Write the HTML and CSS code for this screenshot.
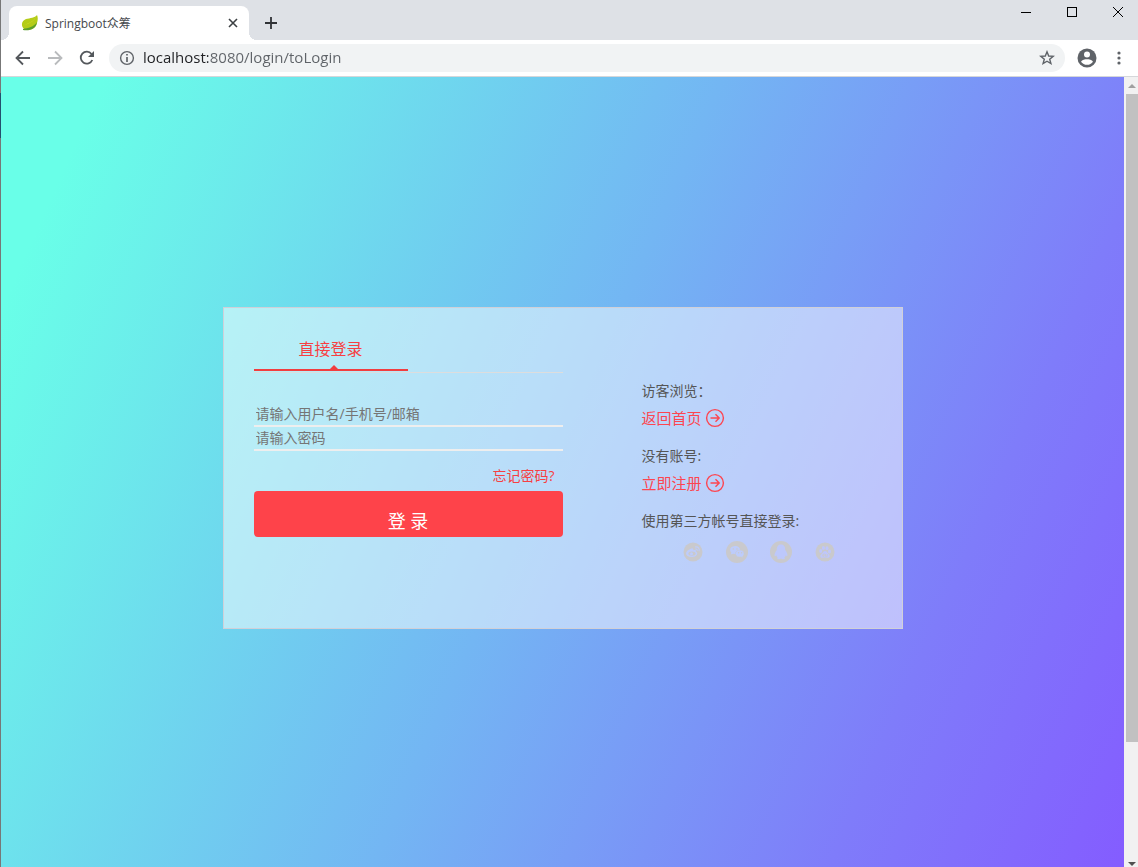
FILE: index.html
```html
<!DOCTYPE html>
<html lang="zh-CN">
<head>
  <meta charset="UTF-8">
  <title>Springboot众筹</title>
  <link rel="stylesheet" href="styles.css">
</head>
<body>
  <header class="tab-strip">
    <div class="tab">
      <svg class="favicon" viewBox="0 0 18 18">
        <path d="M16 1C14 4 9 4 5 5C0 7 0 12 3 15C9 17 15 15 16 9C17 6 17 3 16 1Z" fill="#b4cc18"/>
        <path d="M15 2C14 7 9 9 4 11C7 9 13 8 15 2Z" fill="#d5df2b"/>
        <path d="M2 15C7 14 13 13 16 8C15 15 9 17 2 16Z" fill="#5b9f2c"/>
      </svg>
      <span class="tab-title">Springboot众筹</span>
      <button class="icon-btn" aria-label="关闭标签页">
        <svg width="16" height="16" viewBox="0 0 16 16"><path d="M4 4L12 12M12 4L4 12" stroke="#3c4043" stroke-width="1.6"/></svg>
      </button>
    </div>
    <button class="icon-btn new-tab" aria-label="新标签页">
      <svg width="16" height="16" viewBox="0 0 16 16"><path d="M8 2V14M2 8H14" stroke="#303236" stroke-width="1.8"/></svg>
    </button>
    <div class="window-controls">
      <button class="icon-btn" aria-label="最小化">
        <svg width="12" height="12" viewBox="0 0 12 12"><path d="M1 6.5H11" stroke="#000"/></svg>
      </button>
      <button class="icon-btn" aria-label="最大化">
        <svg width="12" height="12" viewBox="0 0 12 12"><rect x="1.5" y="1.5" width="9" height="9" fill="none" stroke="#000"/></svg>
      </button>
      <button class="icon-btn" aria-label="关闭">
        <svg width="12" height="12" viewBox="0 0 12 12"><path d="M1 1L11 11M11 1L1 11" stroke="#000"/></svg>
      </button>
    </div>
  </header>

  <nav class="toolbar">
    <button class="icon-btn" aria-label="后退">
      <svg width="16" height="16" viewBox="0 0 16 16" fill="none" stroke="#54585c" stroke-width="1.8"><path d="M15 8H2M8 1.5L1.5 8L8 14.5"/></svg>
    </button>
    <button class="icon-btn" aria-label="前进">
      <svg width="16" height="16" viewBox="0 0 16 16" fill="none" stroke="#b9bbbd" stroke-width="1.8"><path d="M1 8H14M8 1.5L14.5 8L8 14.5"/></svg>
    </button>
    <button class="icon-btn" aria-label="重新加载">
      <svg width="16" height="16" viewBox="0 0 16 16"><path d="M13.3 10A6 6 0 1 1 12.5 4" fill="none" stroke="#54585c" stroke-width="1.8"/><path d="M15 1V7H9Z" fill="#54585c"/></svg>
    </button>
    <div class="omnibox">
      <svg width="16" height="16" viewBox="0 0 16 16"><circle cx="8" cy="8" r="6.4" fill="none" stroke="#5f6368" stroke-width="1.4"/><path d="M8 7V12M8 4V5.6" stroke="#5f6368" stroke-width="1.7"/></svg>
      <input class="url" type="text" value="localhost:8080/login/toLogin" aria-label="地址栏">
      <button class="icon-btn" aria-label="收藏">
        <svg width="16" height="16" viewBox="0 0 16 16"><path d="M8 1.8L9.7 6L14.2 6.3L10.7 9.2L11.9 13.6L8 11.2L4.1 13.6L5.3 9.2L1.8 6.3L6.3 6Z" fill="none" stroke="#5f6368" stroke-width="1.4"/></svg>
      </button>
    </div>
    <button class="icon-btn profile" aria-label="用户">
      <svg width="20" height="20" viewBox="0 0 20 20"><circle cx="10" cy="10" r="9.5" fill="#5f6368"/><circle cx="10" cy="6.6" r="3" fill="#fff"/><path d="M4 13.7C5 11.7 8 11.2 10 11.2S15 11.7 16 13.7C14.5 15.8 12.5 16.8 10 16.8S5.5 15.8 4 13.7Z" fill="#fff"/></svg>
    </button>
    <button class="icon-btn" aria-label="菜单">
      <svg width="16" height="16" viewBox="0 0 16 16" fill="#5f6368"><circle cx="8" cy="3" r="1.6"/><circle cx="8" cy="8" r="1.6"/><circle cx="8" cy="13" r="1.6"/></svg>
    </button>
  </nav>

  <div class="viewport">
    <main class="page">
      <div class="login-box">
        <form class="login-form">
          <div class="tabs">
            <a class="tabs-item active" href="#">直接登录</a>
          </div>
          <input class="field" type="text" placeholder="请输入用户名/手机号/邮箱" aria-label="用户名">
          <input class="field" type="password" placeholder="请输入密码" aria-label="密码">
          <a class="forgot" href="#">忘记密码?</a>
          <button class="submit" type="button">登 录</button>
        </form>

        <aside class="side">
          <p>访客浏览：</p>
          <a class="side-link" href="#">返回首页
            <svg width="20" height="20" viewBox="0 0 20 20" fill="none" stroke="#fd4550" stroke-width="1.4"><circle cx="10" cy="10" r="8.4"/><path d="M5.5 10H14M10.5 6.3L14.2 10L10.5 13.7"/></svg>
          </a>
          <p>没有账号:</p>
          <a class="side-link" href="#">立即注册
            <svg width="20" height="20" viewBox="0 0 20 20" fill="none" stroke="#fd4550" stroke-width="1.4"><circle cx="10" cy="10" r="8.4"/><path d="M5.5 10H14M10.5 6.3L14.2 10L10.5 13.7"/></svg>
          </a>
          <p>使用第三方帐号直接登录:</p>
          <div class="social">
            <a href="#" aria-label="微博">
              <svg viewBox="0 0 24 24">
                <circle cx="12" cy="12" r="9.5" fill="#c9c9cd"/>
                <path d="M10.5 8.5C12 8 12.5 9 12.2 10.2C14 9.6 15.5 10 15 11.6C17.5 12.5 16.5 17 11 17C7 17 5 15.2 5 13.5C5 11.5 8.5 8.8 10.5 8.5Z" fill="#bdccfb"/>
                <ellipse cx="11" cy="13.6" rx="3.6" ry="2.2" fill="#c9c9cd"/>
                <circle cx="10.5" cy="13.8" r="1.5" fill="#bdccfb"/>
                <path d="M14 7C17 6.3 19 8.5 18 11.2M14.2 9C15.8 8.7 16.5 9.7 16.1 10.8" fill="none" stroke="#bdccfb" stroke-width="1.1"/>
              </svg>
            </a>
            <a href="#" aria-label="微信">
              <svg viewBox="0 0 24 24">
                <circle cx="12" cy="12" r="11" fill="#c9c9cd"/>
                <path d="M5.8 14.5L6.4 12.7C3.5 9.8 6 6 10 6C13.2 6 15.2 8 15.2 10.2C15.2 13 12 14.5 8.3 13.8Z" fill="#bdccfb"/>
                <path d="M18 18L17.7 16.5C20.5 14.2 18.8 10 15.2 10C11.8 10 10 12.2 10.5 14.5C11 16.6 13.6 17.5 16 16.9Z" fill="#bdccfb" stroke="#c9c9cd" stroke-width=".6"/>
                <g fill="#c9c9cd"><circle cx="8.3" cy="9" r=".8"/><circle cx="12" cy="9" r=".8"/><circle cx="13.6" cy="12.8" r=".7"/><circle cx="16.6" cy="12.8" r=".7"/></g>
              </svg>
            </a>
            <a href="#" aria-label="QQ">
              <svg viewBox="0 0 24 24">
                <circle cx="12" cy="12" r="11" fill="#c9c9cd"/>
                <path d="M12 4.5C8.8 4.5 7.6 7 7.8 10C6 12.5 5 14.8 5.8 16C6.2 16.5 7 15.6 7.3 15.2C7.5 16.4 8.1 17 8.7 17.5C6.8 19.5 10.8 19.8 12 18.3C13.2 19.8 17.2 19.5 15.3 17.5C15.9 17 16.5 16.4 16.7 15.2C17 15.6 17.8 16.5 18.2 16C19 14.8 18 12.5 16.2 10C16.4 7 15.2 4.5 12 4.5Z" fill="#bdc8fb"/>
              </svg>
            </a>
            <a href="#" aria-label="百度">
              <svg viewBox="0 0 24 24">
                <circle cx="12" cy="12" r="9.5" fill="#c9c9cd"/>
                <g fill="#bec6fb">
                  <ellipse cx="7.7" cy="11" rx="1.5" ry="2"/><ellipse cx="10.4" cy="8" rx="1.5" ry="2"/><ellipse cx="14" cy="8.2" rx="1.5" ry="2"/><ellipse cx="16.5" cy="11.5" rx="1.5" ry="1.9"/>
                  <path d="M12 11C14 11 14.2 13 16 14.5C17.6 16 16.5 18 14.5 17.7C12.5 17.3 11.5 17.3 9.6 17.7C7.4 18 6.6 15.9 8.2 14.4C9.8 13 10.3 11 12 11Z"/>
                </g>
                <path d="M11 13.5V16.2H9.7V14.8H11M12.5 14V16.2H14.3V14" fill="none" stroke="#c9c9cd" stroke-width=".8"/>
              </svg>
            </a>
          </div>
        </aside>
      </div>
    </main>
    <div class="scrollbar">
      <svg width="12" height="16" viewBox="0 0 12 16"><path d="M2 11H10L6 7Z" fill="#a0a0a0"/></svg>
      <div class="thumb"></div>
      <svg width="12" height="6" viewBox="0 0 12 6"><path d="M2 1H10L6 5Z" fill="#505050"/></svg>
    </div>
  </div>
</body>
</html>
```
FILE: styles.css
```css
* {
  box-sizing: border-box;
}

body {
  display: flex;
  flex-direction: column;
  min-height: 100vh;
  margin: 0;
  padding-left: 1px;
  background: linear-gradient(#777 93px, #24506e 93px, #24506e 138px, #777 138px);
  font-family: "Open Sans", "Noto Sans CJK SC", sans-serif;
  font-size: 14px;
}

a {
  color: #f73f42;
  text-decoration: none;
}

input,
button {
  font: inherit;
}

svg {
  display: block;
}

.icon-btn {
  padding: 0;
  border: none;
  background: none;
  cursor: pointer;
}

/* browser tabs */
.tab-strip {
  display: flex;
  height: 40px;
  padding-left: 8px;
  background: #dee1e6;
}

.tab {
  position: relative;
  display: flex;
  align-items: center;
  gap: 6px;
  width: 240px;
  margin-top: 6px;
  padding: 0 8px 0 12px;
  border-radius: 8px 8px 0 0;
  background: #fff;
}

.tab::before,
.tab::after {
  content: "";
  position: absolute;
  bottom: 0;
  width: 8px;
  height: 8px;
}

.tab::before {
  left: -8px;
  background: radial-gradient(circle at 0 0, transparent 8px, #fff 8px);
}

.tab::after {
  right: -8px;
  background: radial-gradient(circle at 100% 0, transparent 8px, #fff 8px);
}

.favicon {
  width: 18px;
  height: 18px;
}

.tab-title {
  flex: 1;
  font-size: 12px;
  color: #45484c;
}

.new-tab {
  margin: 6px 0 0 14px;
}

.window-controls {
  display: flex;
  gap: 34px;
  align-items: center;
  height: 24px;
  margin-left: auto;
  padding-right: 14px;
}

/* address bar */
.toolbar {
  display: flex;
  align-items: center;
  gap: 16px;
  height: 37px;
  padding: 0 11px 0 14px;
  border-bottom: 1px solid #d5d7da;
  background: #fff;
}

.omnibox {
  display: flex;
  flex: 1;
  align-items: center;
  gap: 8px;
  height: 28px;
  margin: 0 -4px 0 -2px;
  padding: 0 10px;
  border-radius: 14px;
  background: #f1f3f4;
}

.omnibox .icon-btn,
.profile {
  flex: none;
}

.profile {
  margin-right: -2px;
}

.url {
  flex: 1;
  height: 22px;
  padding: 0 0 2px;
  border: none;
  outline: none;
  background: linear-gradient(90deg, #202124 65px, #5f6368 65px);
  background-clip: text;
  color: transparent;
  font-size: 15px;
  line-height: 20px;
}

/* page */
.viewport {
  display: flex;
  flex: 1;
}

.page {
  flex: 1;
  padding: 230px 20px;
  background: linear-gradient(114deg, #69ffe8 7%, #73b6f3 49%, #7f7cfa 80%, #845cff 100%);
}

.login-box {
  display: flex;
  justify-content: space-between;
  max-width: 680px;
  min-height: 322px;
  margin: 0 auto;
  padding: 30px;
  border: 1px solid #d0d0d8;
  background: rgba(255, 255, 255, .5);
}

.login-form {
  display: flex;
  flex-direction: column;
  width: 309px;
}

.tabs {
  display: flex;
  margin-bottom: 30px;
  padding-bottom: 1px;
  border-bottom: 1px solid #ddd;
}

.tabs-item {
  position: relative;
  width: 154px;
  height: 33px;
  border-bottom: 2px solid #f13e40;
  font-size: 16px;
  line-height: 22px;
  text-align: center;
}

.tabs-item.active::after {
  content: "";
  position: absolute;
  bottom: 0;
  left: 76px;
  border: 4px solid transparent;
  border-top: none;
  border-bottom-color: #f13e40;
}

.field {
  height: 24px;
  padding: 0 2px 2px;
  border: none;
  border-bottom: 2px solid #eee;
  outline: none;
  background: none;
}

.field::placeholder {
  color: #757575;
}

.forgot {
  align-self: flex-end;
  margin: 15px 8px 5px;
  line-height: 20px;
}

.submit {
  height: 46px;
  padding: 14px 0 0;
  border: none;
  border-radius: 4px;
  background: #fe434a;
  color: #fff;
  font-size: 18px;
  line-height: 30px;
  cursor: pointer;
}

.side {
  width: 230px;
  padding-top: 43px;
}

.side p {
  margin: 0;
  color: #555;
  line-height: 20px;
}

.side-link {
  display: flex;
  align-items: center;
  gap: 3px;
  margin: 7px 0 18px;
  color: #fd4550;
  font-size: 15px;
  line-height: 20px;
}

.social {
  display: flex;
  gap: 20px;
  margin: 9px 0 0 39px;
}

.social svg {
  width: 24px;
  height: 24px;
}

.scrollbar {
  display: flex;
  flex-direction: column;
  width: 14px;
  padding-left: 2px;
  background: #f1f1f1;
}

.thumb {
  height: 82%;
  margin: 1px 0 auto;
  background: #c1c1c1;
}
```
